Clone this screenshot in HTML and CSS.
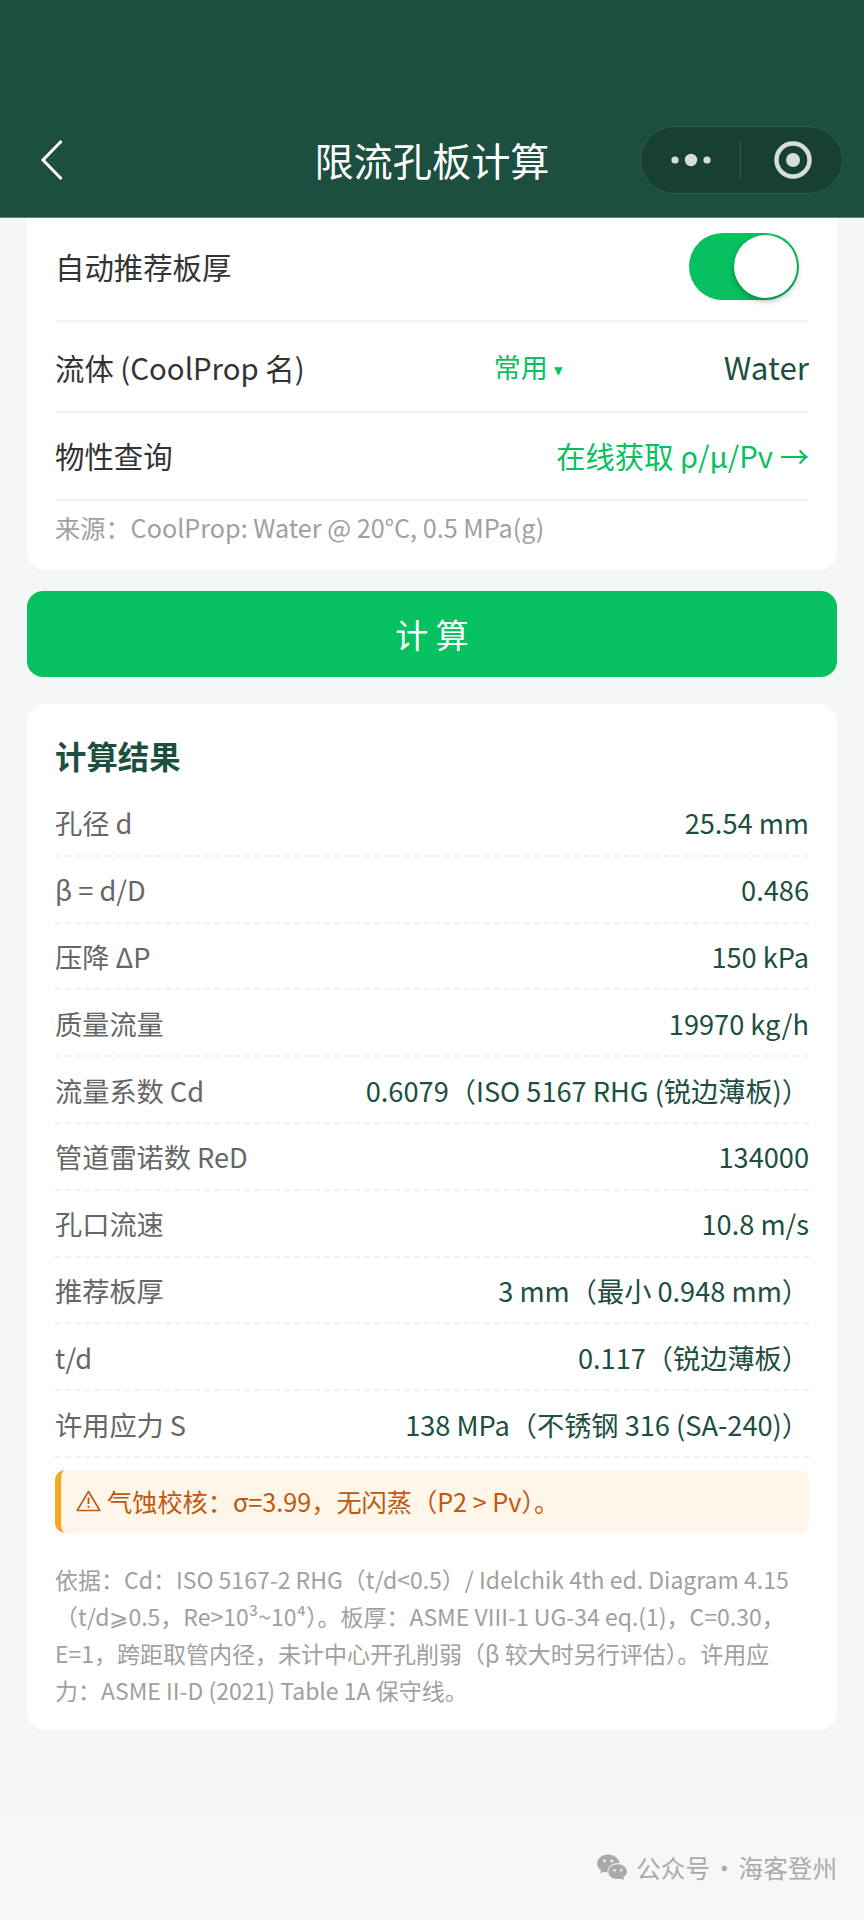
FILE: index.html
```html
<!DOCTYPE html>
<html lang="zh-CN">
<head>
    <meta charset="UTF-8">
    <meta name="viewport" content="width=device-width, initial-scale=1.0">
    <title>限流孔板计算</title>
    <link rel="stylesheet" href="styles.css">
</head>
<body>
    <!-- Nav bar -->
    <div class="nav">
        <svg class="back-icon" width="23" height="42" viewBox="0 0 23 42"><path d="M21.5 2 L3 21 L21.5 40" fill="none" stroke="#fff" stroke-width="3"/></svg>
        <div class="nav-title">限流孔板计算</div>
        <div class="capsule">
            <svg class="capsule-more" width="48" height="16" viewBox="0 0 48 16"><circle cx="8" cy="8" r="3.6"/><circle cx="24" cy="8" r="6.2"/><circle cx="40" cy="8" r="3.6"/></svg>
            <div class="capsule-line"></div>
            <svg class="capsule-close" width="40" height="40" viewBox="0 0 40 40"><circle cx="20" cy="20" r="16.5" fill="none" stroke="#d5dedb" stroke-width="4.5"/><circle cx="20" cy="20" r="7"/></svg>
        </div>
    </div>

    <div class="page">
        <!-- Input card, scrolled under the nav -->
        <div class="card input-card">
            <div class="form-row row-auto">
                <span class="form-label">自动推荐板厚</span>
                <div class="switch"><div class="switch-knob"></div></div>
            </div>
            <div class="form-row row-fluid">
                <span class="form-label">流体 (CoolProp 名)</span>
                <span class="picker">常用<i class="picker-arrow">▾</i></span>
                <span class="form-value">Water</span>
            </div>
            <div class="form-row row-query">
                <span class="form-label">物性查询</span>
                <span class="form-link">在线获取 ρ/μ/Pv →</span>
            </div>
            <div class="source">来源&#xFF1A;CoolProp: Water @ 20°C, 0.5 MPa(g)</div>
        </div>

        <button class="calc-btn">计 算</button>

        <!-- Results -->
        <div class="card result-card">
            <div class="result-title">计算结果</div>
            <div class="result-row"><span>孔径 d</span><b>25.54 mm</b></div>
            <div class="result-row"><span>β = d/D</span><b>0.486</b></div>
            <div class="result-row"><span>压降 ΔP</span><b>150 kPa</b></div>
            <div class="result-row"><span>质量流量</span><b>19970 kg/h</b></div>
            <div class="result-row"><span>流量系数 Cd</span><b>0.6079&#xFF08;ISO 5167 RHG (锐边薄板)&#xFF09;</b></div>
            <div class="result-row"><span>管道雷诺数 ReD</span><b>134000</b></div>
            <div class="result-row"><span>孔口流速</span><b>10.8 m/s</b></div>
            <div class="result-row"><span>推荐板厚</span><b>3 mm&#xFF08;最小 0.948 mm&#xFF09;</b></div>
            <div class="result-row"><span>t/d</span><b>0.117&#xFF08;锐边薄板&#xFF09;</b></div>
            <div class="result-row"><span>许用应力 S</span><b>138 MPa&#xFF08;不锈钢 316 (SA-240)&#xFF09;</b></div>

            <div class="alert">
                <svg class="alert-icon" width="25" height="22" viewBox="0 0 25 22"><path d="M12.5 1.5 L23.8 20.5 H1.2 Z" fill="none" stroke="#c0590f" stroke-width="1.6" stroke-linejoin="round"/><path d="M12.5 7.5 V14" stroke="#c0590f" stroke-width="1.8"/><circle cx="12.5" cy="16.8" r="1.1" fill="#c0590f"/></svg>
                <span>气蚀校核&#xFF1A;σ=3.99&#xFF0C;无闪蒸&#xFF08;P2 &gt; Pv&#xFF09;。</span>
            </div>

            <div class="basis">依据&#xFF1A;Cd&#xFF1A;ISO 5167-2 RHG&#xFF08;t/d&lt;0.5&#xFF09;/ Idelchik 4th ed. Diagram 4.15&#xFF08;t/d⩾0.5&#xFF0C;Re&gt;10³~10⁴&#xFF09;。板厚&#xFF1A;ASME VIII-1 UG-34 eq.(1)&#xFF0C;C=0.30&#xFF0C;E=1&#xFF0C;跨距取管内径&#xFF0C;未计中心开孔削弱&#xFF08;β 较大时另行评估&#xFF09;。许用应力&#xFF1A;ASME II-D (2021) Table 1A 保守线。</div>
        </div>
    </div>

    <!-- Watermark -->
    <div class="watermark">
        <svg width="32" height="26" viewBox="0 0 33 28"><path d="M12.5 0.5 C5.8 0.5 0.5 4.8 0.5 10.2 C0.5 13.2 2.2 15.8 4.8 17.6 L3.8 21 L7.8 19 C9 19.4 10.4 19.6 11.8 19.7 C11.3 14 16 9.6 23.6 9.6 C24 9.6 24.3 9.6 24.6 9.6 C23.6 4.4 18.6 0.5 12.5 0.5 Z" fill="#aaa"/><path d="M22.8 11 C17 11 12.6 14.6 12.6 19 C12.6 23.4 17 27 22.8 27 C24 27 25 26.8 26 26.6 L29.6 28 L28.8 24.8 C31 23.4 32.6 21.4 32.6 19 C32.6 14.6 28.4 11 22.8 11 Z" fill="#aaa"/><circle cx="8.5" cy="7.5" r="1.5" fill="#f7f7f7"/><circle cx="16.5" cy="7.5" r="1.5" fill="#f7f7f7"/><circle cx="19.2" cy="17.5" r="1.3" fill="#f7f7f7"/><circle cx="26.4" cy="17.5" r="1.3" fill="#f7f7f7"/></svg>
        <span>公众号<em class="watermark-dot">·</em>海客登州</span>
    </div>
</body>
</html>
```

FILE: styles.css
```css
html, body {
    margin: 0;
    padding: 0;
}
body {
    position: relative;
    width: 864px;
    height: 1920px;
    overflow: hidden;
    background: #f5f7f6;
    font-family: "Noto Sans CJK SC", "Noto Sans", sans-serif;
}
.nav {
    display: flex;
    align-items: center;
    justify-content: space-between;
    height: 91px;
    padding: 126px 21px 0 40px;
    background: #1c4f40;
    border-bottom: 1px solid #5f8579;
    position: relative;
}
.back-icon {
    margin-top: -23px;
}
.nav-title {
    position: absolute;
    left: 0;
    right: 0;
    top: 129px;
    text-align: center;
    color: #fff;
    font-size: 39.2px;
    line-height: 60px;
}
.capsule {
    display: flex;
    align-items: center;
    box-sizing: border-box;
    width: 203px;
    height: 68px;
    margin-top: -24px;
    background: #183f33;
    border: 1px solid #2d5c4d;
    border-radius: 34px;
}
.capsule svg {
    fill: #d5dedb;
}
.capsule-more {
    margin-left: 26px;
}
.capsule-line {
    width: 1px;
    height: 40px;
    margin-left: 25px;
    background: #2d5c4d;
}
.capsule-close {
    margin-left: 32px;
}
.page {
    padding: 0 27px;
}
.card {
    background: #fff;
    border-radius: 18px;
    padding: 0 28px;
}
.input-card {
    height: 352px;
    border-radius: 0 0 18px 18px;
}
.form-row {
    display: flex;
    align-items: center;
    justify-content: space-between;
    box-sizing: border-box;
    border-bottom: 2px solid #f2f3f3;
}
.row-auto {
    height: 104px;
    padding-bottom: 6px;
}
.row-fluid {
    height: 91px;
}
.row-query {
    height: 88px;
    padding-bottom: 2px;
}
.form-label {
    font-size: 29.4px;
    color: #333;
}
.form-value {
    font-size: 31.4px;
    color: #1c4f40;
}
.form-link {
    font-size: 29.3px;
    color: #07c160;
}
.picker {
    font-size: 27px;
    color: #07c160;
    margin-left: 28px;
}
.picker-arrow {
    font-style: normal;
    font-size: 17px;
    margin-left: 6px;
    vertical-align: 2px;
}
.switch {
    position: relative;
    box-sizing: border-box;
    width: 110px;
    height: 67px;
    margin-right: 10px;
    background: #07c160;
    border-radius: 34px;
}
.switch-knob {
    position: absolute;
    top: 2px;
    right: 2px;
    width: 63px;
    height: 63px;
    background: #fff;
    border-radius: 50%;
    box-shadow: 0 3px 6px rgba(0, 0, 0, 0.3);
}
.source {
    margin-top: 6px;
    font-size: 25.2px;
    line-height: 40px;
    color: #a0a0a0;
}
.calc-btn {
    display: block;
    width: 100%;
    height: 86px;
    margin: 21px 0 27px;
    padding: 0;
    background: #07c160;
    color: #fff;
    border: none;
    border-radius: 16px;
    font-family: inherit;
    font-size: 33px;
}
.result-card {
    box-sizing: border-box;
    height: 1026px;
    padding-top: 28px;
}
.result-title {
    height: 58px;
    font-size: 31.4px;
    font-weight: bold;
    line-height: 48px;
    color: #1c4f40;
}
.result-row {
    display: flex;
    align-items: center;
    justify-content: space-between;
    box-sizing: border-box;
    height: 66.8px;
    border-bottom: 2px dashed #f0f1f1;
    font-size: 27.2px;
}
.result-row span {
    color: #666;
}
.result-row b {
    font-weight: normal;
    color: #1c4f40;
}
.alert {
    display: flex;
    align-items: center;
    box-sizing: border-box;
    height: 63px;
    margin-top: 12px;
    padding-left: 15px;
    background: #fff6ea;
    border-left: 6px solid #f5a623;
    border-radius: 10px;
    font-size: 25.2px;
    color: #c0590f;
}
.alert-icon {
    margin-right: 6px;
}
.basis {
    margin-top: 28px;
    font-size: 23px;
    line-height: 37px;
    color: #a0a0a0;
}
.watermark {
    position: absolute;
    left: 0;
    right: 0;
    bottom: 0;
    display: flex;
    align-items: center;
    justify-content: flex-end;
    gap: 8px;
    box-sizing: border-box;
    height: 103px;
    padding: 0 27px 4px 0;
    background: #f7f7f7;
    font-size: 24.6px;
    color: #aaa;
}
.watermark-dot {
    font-style: normal;
    margin: 0 2px;
}
```
